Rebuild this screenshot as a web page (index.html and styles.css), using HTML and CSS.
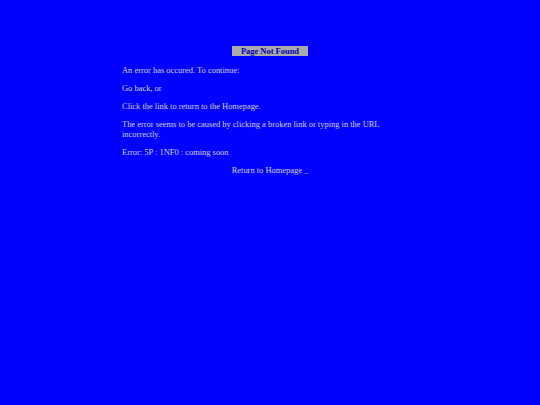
FILE: index.html
```html
<!DOCTYPE html>
<html>
<head>
<meta charset="utf-8">
<link rel="stylesheet" href="styles.css">
<title>Page Not Found</title>
</head>
<body>
<div class="wrap">
  <div class="head"><span class="title">Page Not Found</span></div>
  <p>An error has occured. To continue:</p>
  <p>Go back, or</p>
  <p>Click the link to return to the Homepage.</p>
  <p>The error seems to be caused by clicking a broken link or typing in the URL incorrectly.</p>
  <p>Error: 5P : 1NF0 : coming soon</p>
  <div class="menu"><a class="link" href="#">Return to Homepage</a> _</div>
</div>
</body>
</html>
```
FILE: styles.css
```css
html, body {
  margin: 0;
  padding: 0;
  background: #0000ff;
  height: 100%;
}
body {
  font-family: "Liberation Serif", "Times New Roman", serif;
  font-size: 8.45px;
  line-height: 10px;
  color: #d4d4d4;
}
.wrap {
  width: 296px;
  margin: 0 auto;
  padding-top: 46px;
}
.head {
  text-align: center;
  margin-bottom: 9px;
}
.title {
  display: inline-block;
  background: #aaaaaa;
  color: #0000a8;
  font-weight: bold;
  padding: 0 9px;
  line-height: 10px;
}
p {
  margin: 0 0 8px 0;
}
.menu {
  text-align: center;
}
.link {
  color: #d4d4d4;
  text-decoration: none;
}
```
